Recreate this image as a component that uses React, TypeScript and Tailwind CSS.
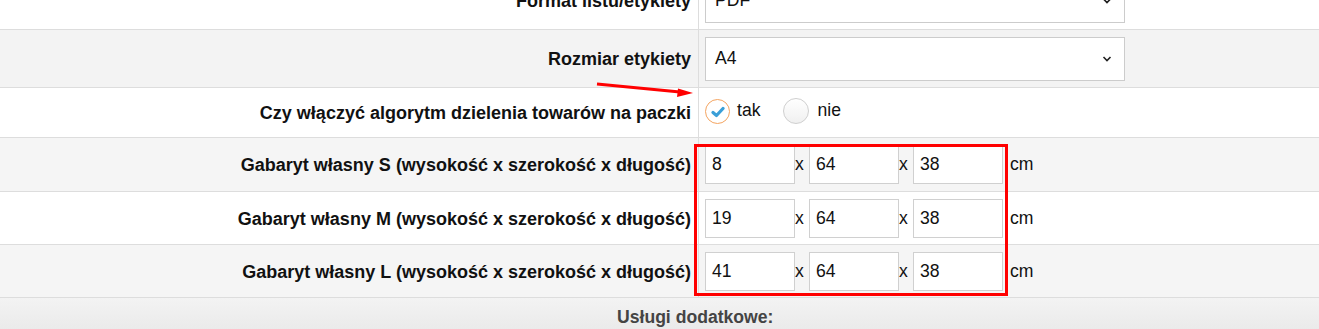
import React from "react";

const Chevron = () => (
  <svg width="10" height="7" viewBox="0 0 10 7" className="absolute right-[12px] top-1/2 -translate-y-1/2">
    <path d="M1.5 1.5 L5 5 L8.5 1.5" fill="none" stroke="#222" strokeWidth="1.6" />
  </svg>
);

const Select = ({ value }: { value: string }) => (
  <div className="relative w-[420px] h-[44px] border border-[#cccccc] bg-white flex items-center pl-[9px] text-[17.6px] text-[#111]">
    {value}
    <Chevron />
  </div>
);

const Input = ({ value }: { value: string }) => (
  <div className="w-[90px] h-[39px] border border-[#d0d0d0] bg-white flex items-center pl-[6px] text-[17.6px] text-[#111]">
    {value}
  </div>
);

const Row = ({
  label,
  bg,
  h,
  children,
}: {
  label: string;
  bg: string;
  h: string;
  children: React.ReactNode;
}) => (
  <div className={`grid grid-cols-[698px_1fr] border-b border-[#dddddd] ${bg} ${h}`}>
    <div className="flex items-center justify-end pr-[7px] pt-[2px] font-bold text-[18px] text-[#111] whitespace-nowrap">
      {label}
    </div>
    <div className="border-l border-[#dddddd] flex items-center pl-[6px]">{children}</div>
  </div>
);

const DimRow = ({ a, b, c }: { a: string; b: string; c: string }) => (
  <div className="flex items-center text-[17.6px] text-[#111]">
    <Input value={a} />
    <span className="w-[14px]">x</span>
    <Input value={b} />
    <span className="w-[14px]">x</span>
    <Input value={c} />
    <span className="ml-[7px]">cm</span>
  </div>
);

export default function App() {
  return (
    <div className="relative w-[1319px] h-[329px] overflow-hidden bg-white font-['Liberation_Sans',Arial,sans-serif]">
      <div className="-mt-[28px]">
        <Row label="Format listu/etykiety" bg="bg-white" h="h-[58px]">
          <Select value="PDF" />
        </Row>
        <Row label="Rozmiar etykiety" bg="bg-[#f3f3f3]" h="h-[58px]">
          <Select value="A4" />
        </Row>
        <Row label="Czy włączyć algorytm dzielenia towarów na paczki" bg="bg-white" h="h-[50px]">
          <div className="flex items-center text-[17.6px] text-[#111] -mt-[3px]">
            <span className="w-[25px] h-[25px] rounded-full border border-[#f4a460] bg-white flex items-center justify-center">
              <svg width="14" height="12" viewBox="0 0 14 12" className="mt-[1px]">
                <path d="M2 6.5 L5.5 9.5 L12 2.5" fill="none" stroke="#3a9fd8" strokeWidth="3.2" strokeLinecap="round" strokeLinejoin="round" />
              </svg>
            </span>
            <span className="ml-[7px] -mt-[2px]">tak</span>
            <span className="ml-[23px] w-[26px] h-[26px] rounded-full border border-[#cfcfcf] bg-gradient-to-b from-[#ffffff] to-[#f0f0f0]" />
            <span className="ml-[8px] -mt-[2px]">nie</span>
          </div>
        </Row>
        <Row label="Gabaryt własny S (wysokość x szerokość x długość)" bg="bg-[#f5f5f5]" h="h-[54px]">
          <DimRow a="8" b="64" c="38" />
        </Row>
        <Row label="Gabaryt własny M (wysokość x szerokość x długość)" bg="bg-white" h="h-[53px]">
          <DimRow a="19" b="64" c="38" />
        </Row>
        <Row label="Gabaryt własny L (wysokość x szerokość x długość)" bg="bg-[#f5f5f5]" h="h-[53px]">
          <DimRow a="41" b="64" c="38" />
        </Row>
        <div className="h-[40px] bg-gradient-to-b from-[#f3f3f3] to-[#e8e8e8] flex items-center pl-[617px] pb-[2px] font-bold text-[17.6px] text-[#444]">
          Usługi dodatkowe:
        </div>
      </div>

      {/* red highlight box */}
      <div className="absolute left-[694px] top-[144px] w-[314px] h-[152px] border-[3px] border-[#ff0000] pointer-events-none" />

      {/* red arrow */}
      <svg className="absolute left-0 top-0 pointer-events-none" width="1319" height="329">
        <line x1="597" y1="84" x2="680" y2="92" stroke="#ff0000" strokeWidth="3" />
        <polygon points="693,93 678,88.5 677,97" fill="#ff0000" />
      </svg>
    </div>
  );
}
